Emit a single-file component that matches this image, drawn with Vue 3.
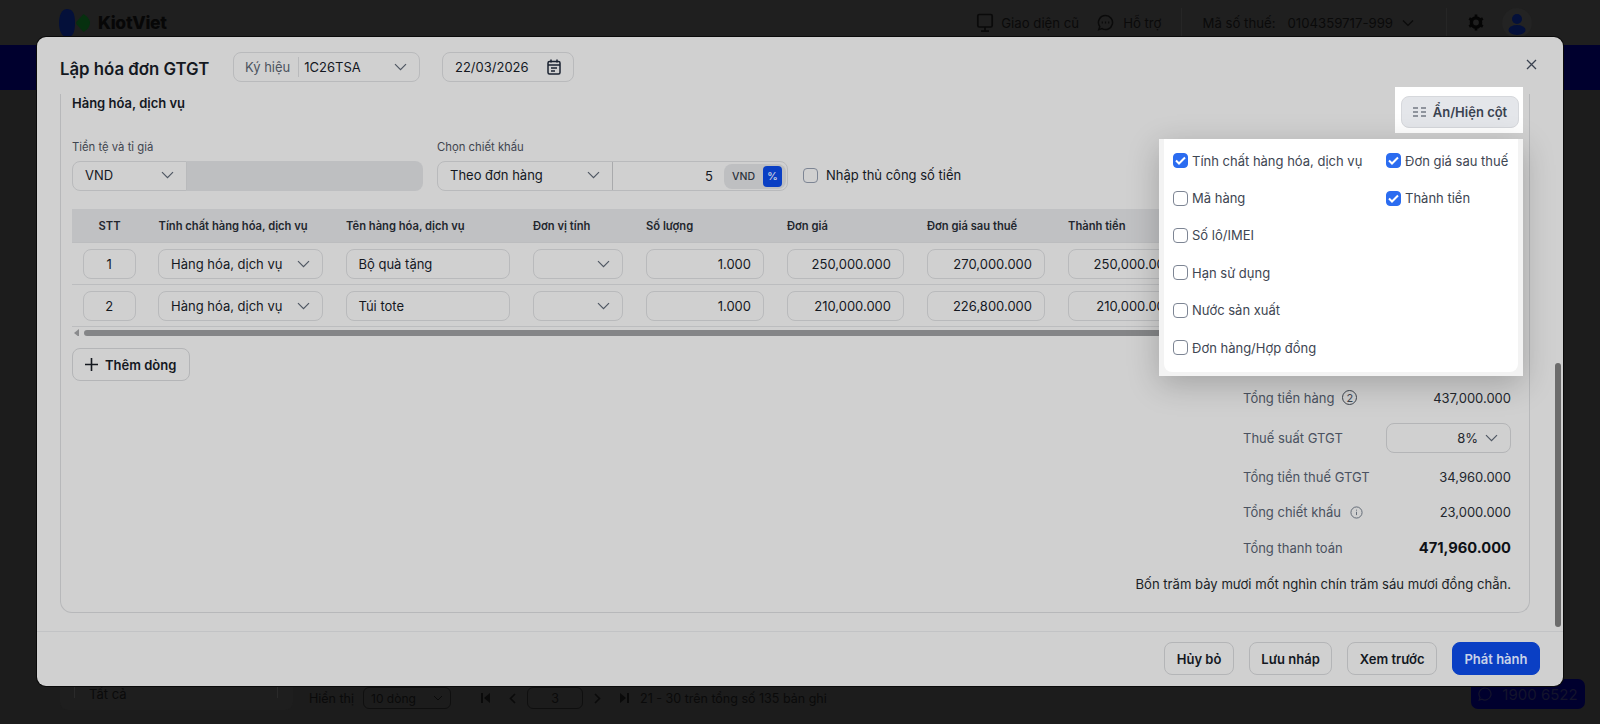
<script setup>
const rows = [
  { stt: 1, name: 'Bộ quà tặng', qty: '1.000', price: '250,000.000', after: '270,000.000', total: '250,000.000' },
  { stt: 2, name: 'Túi tote', qty: '1.000', price: '210,000.000', after: '226,800.000', total: '210,000.000' },
]
const headers = ['STT', 'Tính chất hàng hóa, dịch vụ', 'Tên hàng hóa, dịch vụ', 'Đơn vị tính', 'Số lượng', 'Đơn giá', 'Đơn giá sau thuế', 'Thành tiền']
const col1 = [
  { t: 'Tính chất hàng hóa, dịch vụ', c: true },
  { t: 'Mã hàng', c: false },
  { t: 'Số lô/IMEI', c: false },
  { t: 'Hạn sử dụng', c: false },
  { t: 'Nước sản xuất', c: false },
  { t: 'Đơn hàng/Hợp đồng', c: false },
]
const col2 = [
  { t: 'Đơn giá sau thuế', c: true },
  { t: 'Thành tiền', c: true },
]
</script>

<template>
  <div class="page">
    <header class="topbar">
      <div class="logo">
        <svg width="32" height="28" viewBox="0 0 32 28">
          <path d="M8 0C3 0 0 6 0 14s3 14 8 14c5 0 8-3 8-14S13 0 8 0Z" fill="#04103a" />
          <path d="M24.5 5 Q31 9 31 14 Q31 19 24.5 23 L17.5 15.2 Q16.5 14 17.5 12.8Z" fill="#06300f" />
        </svg>
        <span class="logo-text">KiotViet</span>
      </div>
      <div class="top-right">
        <svg width="18" height="20" viewBox="0 0 18 20" fill="none" stroke="#0a0a0a" stroke-width="1.7"><rect x="1.8" y="1.5" width="14.4" height="12.5" rx="1.5" /><path d="M9 14v3.5M5 18.2h8" /></svg>
        <span class="tt w1">Giao diện cũ</span>
        <svg class="t2" width="17" height="17" viewBox="0 0 17 17" fill="none" stroke="#0a0a0a" stroke-width="1.5"><path d="M8.5 1.5a7 7 0 1 1-3.4 13.1L1.8 15.6l1-3A7 7 0 0 1 8.5 1.5Z" /><path d="M4.7 8.5h1.2M7.9 8.5h1.2M11.1 8.5h1.2" stroke-width="2" /></svg>
        <span class="tt w2">Hỗ trợ</span>
        <i class="vline v1"></i>
        <span class="tt">Mã số thuế:</span>
        <span class="tt w4">0104359717-999</span>
        <svg class="chev-top" width="12" height="8" viewBox="0 0 12 8" fill="none" stroke="#0a0a0a" stroke-width="1.2"><path d="M1 1.5l5 5 5-5" /></svg>
        <i class="vline v2"></i>
        <svg width="16" height="17" viewBox="0 0 16 17"><circle cx="8" cy="8.5" r="4.6" fill="none" stroke="#050505" stroke-width="3.4" /><path d="M8 .6v3M8 13.4v3M1.2 4.5l2.6 1.5M12.2 11l2.6 1.5M1.2 12.5l2.6-1.5M12.2 6l2.6-1.5" stroke="#050505" stroke-width="2.6" /></svg>
        <span class="avatar">
          <svg width="18" height="21" viewBox="0 0 18 21" fill="#04103a"><circle cx="9" cy="5" r="5" /><ellipse cx="9" cy="16" rx="8.5" ry="5" /></svg>
        </span>
      </div>
    </header>
    <div class="band"></div>

    <footer class="bottom">
      <div class="side-card"><div class="side-inner">Tất cả</div></div>
      <div class="pager">
        <span>Hiển thị</span>
        <span class="pg-select">10 dòng
          <svg width="10" height="6" viewBox="0 0 10 6" fill="none" stroke="#0a0a0a"><path d="M1 1l4 4 4-4" /></svg>
        </span>
        <svg class="first" width="9" height="10" viewBox="0 0 9 10" fill="#0a0a0a"><rect width="2" height="10" /><path d="M9 0v10L3 5z" /></svg>
        <svg width="7" height="11" viewBox="0 0 7 11" fill="none" stroke="#0a0a0a" stroke-width="1.6"><path d="M6 1L1.5 5.5 6 10" /></svg>
        <span class="pg-num">3</span>
        <svg width="7" height="11" viewBox="0 0 7 11" fill="none" stroke="#0a0a0a" stroke-width="1.6"><path d="M1 1l4.5 4.5L1 10" /></svg>
        <svg class="last" width="9" height="10" viewBox="0 0 9 10" fill="#0a0a0a"><rect x="7" width="2" height="10" /><path d="M0 0v10l6-5z" /></svg>
        <span>21 - 30 trên tổng số 135 bản ghi</span>
      </div>
      <div class="hotline">
        <svg width="14" height="14" viewBox="0 0 14 14" fill="none" stroke="#14142c" stroke-width="1.2"><path d="M7 1a6 6 0 1 1-3 11.2L1.2 13l.8-2.6A6 6 0 0 1 7 1Z" /></svg>
        1900 6522
      </div>
    </footer>

    <section class="modal">
      <div class="m-head">
        <h1 class="title">Lập hóa đơn GTGT</h1>
        <div class="ctl kyhieu">
          <span class="kh-label">Ký hiệu</span>
          <span class="kh-val">1C26TSA</span>
          <svg class="chev" width="13" height="8" viewBox="0 0 13 8" fill="none"><path d="M1 1.2l5.5 5.5L12 1.2" /></svg>
        </div>
        <div class="ctl date">
          <span>22/03/2026</span>
          <svg width="14" height="16" viewBox="0 0 14 16" fill="none" stroke="#1a2230" stroke-width="1.5"><rect x="1" y="2.5" width="12" height="12.5" rx="1.5" /><path d="M4 .5v3M10 .5v3M1 6h12M4 9h6M4 12h4" /></svg>
        </div>
        <svg class="close" width="11" height="11" viewBox="0 0 11 11" fill="none" stroke="#3a4250" stroke-width="1.3"><path d="M1 1l9 9M10 1l-9 9" /></svg>
      </div>

      <div class="m-body">
        <div class="panel">
          <h2 class="sec-title">Hàng hóa, dịch vụ</h2>

          <div class="form-row">
            <div class="field f-cur">
              <label>Tiền tệ và tỉ giá</label>
              <div class="cur-wrap">
                <div class="ctl cur">
                  <span>VND</span>
                  <svg class="chev" width="13" height="8" viewBox="0 0 13 8" fill="none"><path d="M1 1.2l5.5 5.5L12 1.2" /></svg>
                </div>
                <div class="rate"></div>
              </div>
            </div>
            <div class="field f-disc">
              <label>Chọn chiết khấu</label>
              <div class="disc-wrap">
                <div class="disc-sel">
                  <span>Theo đơn hàng</span>
                  <svg class="chev" width="13" height="8" viewBox="0 0 13 8" fill="none"><path d="M1 1.2l5.5 5.5L12 1.2" /></svg>
                </div>
                <div class="disc-val">
                  <span class="five">5</span>
                  <span class="toggle"><span class="tg-v">VND</span><span class="tg-p">%</span></span>
                </div>
              </div>
            </div>
            <div class="manual">
              <span class="cb"></span>
              <span>Nhập thủ công số tiền</span>
            </div>
          </div>

          <div class="table">
            <div class="t-row t-head">
              <div v-for="(h, i) in headers" :key="h" class="cell" :class="{ 'c-stt': i === 0 }">{{ h }}</div>
            </div>
            <div v-for="r in rows" :key="r.stt" class="t-row t-data">
              <div class="cell"><div class="inp center">{{ r.stt }}</div></div>
              <div class="cell">
                <div class="inp between">Hàng hóa, dịch vụ
                  <svg class="chev" width="13" height="8" viewBox="0 0 13 8" fill="none"><path d="M1 1.2l5.5 5.5L12 1.2" /></svg>
                </div>
              </div>
              <div class="cell"><div class="inp">{{ r.name }}</div></div>
              <div class="cell">
                <div class="inp end-chev">
                  <svg class="chev" width="13" height="8" viewBox="0 0 13 8" fill="none"><path d="M1 1.2l5.5 5.5L12 1.2" /></svg>
                </div>
              </div>
              <div class="cell"><div class="inp right">{{ r.qty }}</div></div>
              <div class="cell"><div class="inp right">{{ r.price }}</div></div>
              <div class="cell"><div class="inp right">{{ r.after }}</div></div>
              <div class="cell"><div class="inp right">{{ r.total }}</div></div>
            </div>
            <div class="hscroll">
              <svg width="6" height="8" viewBox="0 0 6 8" fill="#8a8b8d"><path d="M5 0v8L0 4z" /></svg>
              <i class="hthumb"></i>
            </div>
          </div>

          <button class="btn add">
            <svg width="13" height="13" viewBox="0 0 13 13" fill="none" stroke="#14181f" stroke-width="1.6"><path d="M6.5 0v13M0 6.5h13" /></svg>
            Thêm dòng
          </button>

          <div class="summary">
            <div class="s-row r1">
              <span class="s-l">Tổng tiền hàng <i class="num-ic">2</i></span><span class="s-v">437,000.000</span>
            </div>
            <div class="s-row r2">
              <span class="s-l">Thuế suất GTGT</span>
              <div class="tax">8%
                <svg class="chev" width="13" height="8" viewBox="0 0 13 8" fill="none"><path d="M1 1.2l5.5 5.5L12 1.2" /></svg>
              </div>
            </div>
            <div class="s-row r3">
              <span class="s-l">Tổng tiền thuế GTGT</span><span class="s-v">34,960.000</span>
            </div>
            <div class="s-row r4">
              <span class="s-l">Tổng chiết khấu
                <svg class="info" width="13" height="13" viewBox="0 0 14 14" fill="none" stroke="#5c6470"><circle cx="7" cy="7" r="6" /><path d="M7 6.2v3.6M7 4v1" /></svg>
              </span><span class="s-v">23,000.000</span>
            </div>
            <div class="s-row r5">
              <span class="s-l">Tổng thanh toán</span><span class="s-t">471,960.000</span>
            </div>
            <p class="words">Bốn trăm bảy mươi mốt nghìn chín trăm sáu mươi đồng chẵn.</p>
          </div>
        </div>
        <i class="vthumb"></i>
      </div>

      <div class="m-foot">
        <button class="btn">Hủy bỏ</button>
        <button class="btn">Lưu nháp</button>
        <button class="btn">Xem trước</button>
        <button class="btn primary">Phát hành</button>
      </div>

      <div class="spot">
        <div class="col-btn">
          <svg width="13" height="10" viewBox="0 0 13 10" fill="none" stroke="#3a4250" stroke-width="1.2"><path d="M0 1h5M8 1h5M0 5h5M8 5h5M0 9h5M8 9h5" /></svg>
          Ẩn/Hiện cột
        </div>
      </div>
      <div class="pop">
        <div class="pop-inner">
          <div class="first-col">
            <div v-for="o in col1" :key="o.t" class="opt">
              <span class="cb" :class="{ on: o.c }">
                <svg v-if="o.c" width="11" height="9" viewBox="0 0 11 9" fill="none" stroke="#fff" stroke-width="2"><path d="M1 4.5l3 3 6-6" /></svg>
              </span>
              {{ o.t }}
            </div>
          </div>
          <div>
            <div v-for="o in col2" :key="o.t" class="opt">
              <span class="cb" :class="{ on: o.c }">
                <svg v-if="o.c" width="11" height="9" viewBox="0 0 11 9" fill="none" stroke="#fff" stroke-width="2"><path d="M1 4.5l3 3 6-6" /></svg>
              </span>
              {{ o.t }}
            </div>
          </div>
        </div>
      </div>
    </section>
  </div>
</template>

<style>
html, body { margin: 0; background: #1c1c1c; }
</style>

<style scoped>
* { box-sizing: border-box; }
.page {
  position: relative;
  width: 1600px;
  height: 724px;
  overflow: hidden;
  display: flex;
  flex-direction: column;
  background: #1c1c1c;
  font-family: Inter, "Noto Sans", sans-serif;
  font-size: 13px;
  color: #14181f;
}
.topbar {
  height: 45px;
  background: #1f1f1f;
  display: flex;
  align-items: center;
  justify-content: space-between;
  padding-left: 59px;
}
.logo { display: flex; align-items: center; gap: 7px; }
.logo-text { font-size: 17.5px; font-weight: 800; color: #070707; letter-spacing: -0.3px; }
.top-right { display: flex; align-items: center; padding-right: 68px; color: #0a0a0a; font-size: 13.2px; }
.tt { white-space: nowrap; }
.w1 { margin-left: 7px; }
.t2 { margin-left: 18px; }
.w2 { margin-left: 9px; }
.vline { width: 1px; height: 30px; background: #262626; }
.v1 { margin: 0 20px; }
.w4 { margin-left: 12px; }
.chev-top { margin-left: 9px; }
.v2 { margin: 0 21px 0 32px; }
.avatar {
  margin-left: 18px;
  width: 30px; height: 30px; border-radius: 50%;
  background: #232323;
  display: flex; align-items: flex-end; justify-content: center;
  padding-bottom: 3px;
}
.band { height: 45px; background: #00002e; }

.bottom {
  margin-top: auto;
  height: 46px;
  padding-left: 60px;
  display: flex;
  color: #0a0a0a;
}
.side-card {
  width: 233px; height: 32px;
  padding-left: 14px;
  background: #1e1e1e;
  border-radius: 0 0 8px 8px;
}
.side-inner {
  width: 204px; height: 20px;
  padding: 8px 0 0 14px;
  line-height: 17px;
  border-left: 1px solid #2a2a2a;
  border-right: 1px solid #2a2a2a;
}
.pager { display: flex; align-items: center; height: 30px; margin-left: 16px; margin-top: 5px; font-size: 12.5px; }
.pg-select {
  margin-left: 9px; width: 88px; height: 22px;
  border: 1px solid #0f0f0f; border-radius: 6px;
  display: flex; align-items: center; justify-content: space-between; padding: 0 7px;
  font-size: 12px;
}
.first { margin-left: 30px; margin-right: 19px; }
.pg-num {
  margin: 0 11px; width: 56px; height: 22px;
  border: 1px solid #0f0f0f; border-radius: 6px;
  display: flex; align-items: center; justify-content: center;
}
.last { margin-left: 19px; margin-right: 11px; }
.hotline {
  margin-left: auto; margin-right: 15px; margin-top: 1px;
  width: 114px; height: 30px;
  background: #00002e; border-radius: 7px;
  color: #14142c;
  display: flex; align-items: center; justify-content: center; gap: 10px;
  font-size: 15px;
}

.modal {
  position: absolute;
  left: 37px; top: 37px;
  width: 1526px; height: 649px;
  background: #d0d0d0;
  border-radius: 9px;
  box-shadow: 0 0 0 1px #0a0a0a;
  display: flex;
  flex-direction: column;
}
.m-head {
  height: 57px;
  flex: none;
  display: flex;
  align-items: flex-start;
  padding: 15px 26px 0 23px;
}
.title { margin: 6px 0 0; font-size: 16.8px; font-weight: 600; color: #14181f; line-height: 22px; width: 173px; white-space: nowrap; }
.ctl {
  height: 30px;
  border: 1px solid #b9babc;
  border-radius: 8px;
  display: flex;
  align-items: center;
}
.chev path { stroke: #4f5763; stroke-width: 1.2; }
.kyhieu { width: 187px; padding: 0 12px 0 11px; }
.kh-label { color: #4c5460; padding-right: 8px; border-right: 1px solid #b9babc; line-height: 20px; }
.kh-val { margin-left: 5px; flex: 1; }
.date { width: 132px; margin-left: 22px; padding: 0 12px; justify-content: space-between; }
.close { margin-left: auto; margin-top: 7px; }

.m-body { position: relative; flex: 1; min-height: 0; padding: 0 33px 18px 23px; }
.panel {
  position: relative;
  height: 519px;
  border: 1px solid #b7b8ba;
  border-top: 0;
  border-radius: 0 0 12px 12px;
  padding: 0 10px 0 11px;
}
.sec-title { margin: 0; padding-top: 1px; font-size: 13px; font-weight: 600; line-height: 17px; color: #14181f; }
.form-row { display: flex; margin-top: 27px; align-items: flex-end; }
.field label { display: block; font-size: 11.3px; color: #3f454f; line-height: 16px; margin-bottom: 6px; }
.f-cur { width: 351px; margin-right: 14px; }
.cur-wrap { display: flex; }
.cur {
  width: 115px; padding: 0 12px 3px; justify-content: space-between;
  border-radius: 8px 0 0 8px;
}
.rate { flex: 1; background: #bebfc1; border-radius: 0 8px 8px 0; }
.f-disc { width: 351px; }
.disc-wrap {
  display: flex; height: 30px; width: 351px;
  border: 1px solid #b9babc; border-radius: 8px;
}
.disc-sel {
  width: 175px; border-right: 1px solid #a9aaac; padding: 0 12px 3px;
  display: flex; align-items: center; justify-content: space-between;
}
.disc-val { flex: 1; display: flex; align-items: center; justify-content: flex-end; padding-right: 1px; }
.five { margin-right: 11px; }
.toggle { display: flex; align-items: center; width: 62px; height: 25px; background: #bebfc1; border-radius: 8px; padding-left: 8px; }
.tg-v { font-size: 10.5px; font-weight: 500; color: #2c323c; flex: 1; }
.tg-p {
  width: 19px; height: 21px; margin-right: 4px; background: #0a3fc4; border-radius: 4px;
  color: #c8d0e0; font-size: 10.5px; font-weight: 600;
  display: flex; align-items: center; justify-content: center;
}
.manual { display: flex; align-items: center; gap: 8px; margin-left: 15px; height: 30px; padding-bottom: 2px; }
.cb {
  flex: none;
  width: 15px; height: 15px;
  border: 1px solid #7d8594;
  border-radius: 4px;
  display: inline-flex; align-items: center; justify-content: center;
}
.cb.on { background: #2b6cf0; border-color: #2b6cf0; }

.table { margin-top: 18px; width: 1447px; overflow: hidden; }
.t-row {
  display: grid;
  grid-template-columns: 75px 187.5px 187px 113px 141px 140px 141px 141px 1fr;
  border-bottom: 1px solid #bcbdbf;
}
.t-head { height: 34px; background: #c0c1c3; font-size: 11.2px; font-weight: 600; color: #23272e; align-items: center; }
.t-data { height: 42px; align-items: center; }
.cell { padding: 0 11.5px; white-space: nowrap; min-width: 0; }
.t-data .cell { padding-left: 11px; }
.c-stt { text-align: center; }
.inp {
  height: 30px;
  border: 1px solid #b9babc;
  border-radius: 8px;
  padding: 0 12px;
  display: flex; align-items: center;
}
.center { justify-content: center; }
.right { justify-content: flex-end; }
.between { justify-content: space-between; }
.end-chev { justify-content: flex-end; }
.hscroll { display: flex; align-items: center; gap: 3px; height: 6px; margin-top: 3px; padding-left: 2px; }
.hthumb { flex: 1; height: 6px; background: #848587; border-radius: 3px; margin-left: 1px; }

.btn {
  font: inherit;
  font-weight: 600;
  height: 33px;
  padding: 0 11.5px;
  background: transparent;
  border: 1px solid #b4b5b7;
  border-radius: 8px;
  color: #14181f;
  display: inline-flex; align-items: center; gap: 6px;
  white-space: nowrap;
}
.add { margin-top: 12px; padding: 0 13px 0 12px; gap: 7px; }

.summary {
  position: absolute;
  right: 18px; bottom: 19px;
  width: 376px;
  color: #4a5260;
}
.s-row { display: flex; justify-content: space-between; align-items: center; margin-left: 108px; }
.r1 { height: 20px; }
.r2 { height: 30px; margin-top: 15px; }
.r3 { height: 20px; margin-top: 14.5px; }
.r4 { height: 20px; margin-top: 15px; }
.r5 { height: 22px; margin-top: 15px; }
.s-l { display: inline-flex; align-items: center; }
.s-v { color: #23272e; }
.s-t { color: #0e1116; font-size: 14.7px; font-weight: 700; }
.num-ic {
  margin-left: 8px; width: 15px; height: 15px; border: 1px solid #3f454f; border-radius: 50%;
  font-style: normal; font-size: 11px; display: inline-flex; align-items: center; justify-content: center; color: #3f454f;
}
.info { margin-left: 9px; }
.tax {
  width: 125px; height: 30px; border: 1px solid #b4b5b7; border-radius: 8px;
  display: flex; align-items: center; justify-content: flex-end; gap: 7px; padding-right: 12px;
  color: #23272e;
}
.words { margin: 16px 0 0; text-align: right; font-size: 13.1px; line-height: 18px; color: #1a1e25; white-space: nowrap; }

.m-foot {
  height: 55px;
  flex: none;
  border-top: 1px solid #c2c3c5;
  display: flex;
  justify-content: flex-end;
  gap: 15px;
  padding: 10px 23px 0 0;
}
.primary { background: #0a3fc4; border-color: #0a3fc4; color: #c8d2e8; }

.vthumb {
  position: absolute;
  right: 2px; top: 269px;
  width: 6px; height: 264px;
  background: #6c6c6c;
  border-radius: 3px;
}

.spot {
  position: absolute;
  left: 1358px; top: 50px;
  width: 128px; height: 46px;
  background: #fff;
  padding: 9px 4px 0 6px;
}
.col-btn {
  height: 32px;
  background: #e4e6ea;
  border: 1px solid #d6d8dc;
  border-radius: 8px;
  color: #3a4250;
  font-size: 13px; font-weight: 600;
  display: flex; align-items: center; justify-content: center; gap: 7px;
}
.pop {
  position: absolute;
  left: 1122px; top: 102px;
  width: 364px; height: 237px;
  background: #f3f3f3;
  padding: 0 5px 4px 5px;
  box-shadow: 0 8px 30px rgba(0, 0, 0, 0.22);
}
.pop-inner {
  height: 100%;
  background: #fff;
  border-radius: 0 0 8px 8px;
  display: flex;
  padding: 3px 0 0 9px;
}
.first-col { width: 213px; }
.opt {
  height: 37.4px;
  display: flex; align-items: center; gap: 4px;
  font-size: 13px; color: #3e4652; white-space: nowrap;
}
</style>
